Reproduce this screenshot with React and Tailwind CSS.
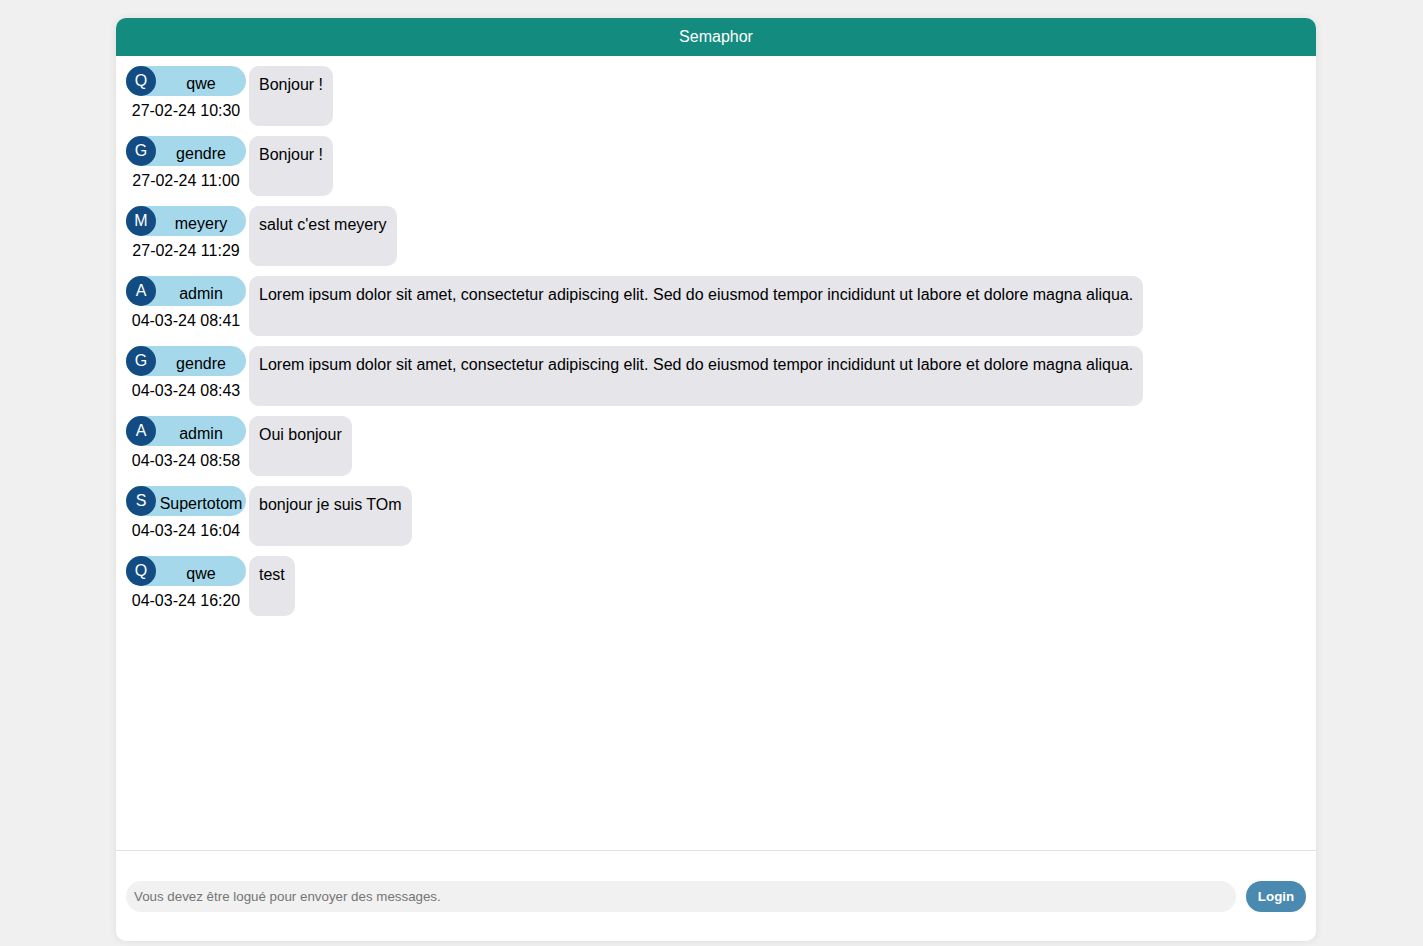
import React from 'react';

const messages = [
  { user: 'qwe', date: '27-02-24 10:30', text: 'Bonjour !' },
  { user: 'gendre', date: '27-02-24 11:00', text: 'Bonjour !' },
  { user: 'meyery', date: '27-02-24 11:29', text: "salut c'est meyery" },
  { user: 'admin', date: '04-03-24 08:41', text: 'Lorem ipsum dolor sit amet, consectetur adipiscing elit. Sed do eiusmod tempor incididunt ut labore et dolore magna aliqua.' },
  { user: 'gendre', date: '04-03-24 08:43', text: 'Lorem ipsum dolor sit amet, consectetur adipiscing elit. Sed do eiusmod tempor incididunt ut labore et dolore magna aliqua.' },
  { user: 'admin', date: '04-03-24 08:58', text: 'Oui bonjour' },
  { user: 'Supertotom', date: '04-03-24 16:04', text: 'bonjour je suis TOm' },
  { user: 'qwe', date: '04-03-24 16:20', text: 'test' },
];

function Message({ msg }) {
  return (
    <div className="flex items-stretch gap-[3px]">
      <div className="w-[120px] shrink-0 flex flex-col">
        <div className="flex items-center h-[30px] rounded-full bg-[#a5d8eb]">
          <div className="w-[30px] h-[30px] rounded-full bg-[#124c82] text-white flex items-center justify-center text-[16px] shrink-0">
            {msg.user[0].toUpperCase()}
          </div>
          <span className="flex-1 text-center text-[16px] text-black leading-none pt-[5px]">{msg.user}</span>
        </div>
        <div className="text-center text-[16px] text-black h-[30px] leading-[30px]">{msg.date}</div>
      </div>
      <div className="bg-[#e5e5ea] rounded-[10px] px-[10px] pt-[10px] pb-[8px] text-[16px] leading-[18px] text-black">
        {msg.text}
      </div>
    </div>
  );
}

export default function App() {
  return (
    <div className="min-h-screen bg-[#f0f0f0] pt-[18px] pb-[5px]" style={{ fontFamily: '"Liberation Sans", Arial, sans-serif' }}>
      <div className="w-[1200px] ml-[116px] bg-white rounded-[10px] shadow-[0_0_8px_rgba(0,0,0,0.08)] flex flex-col h-[923px]">
        <div className="h-[38px] bg-[#138b7e] rounded-t-[10px] flex items-center justify-center text-white text-[16px]">
          Semaphor
        </div>
        <div className="flex-1 flex flex-col gap-[10px] p-[10px] overflow-hidden">
          {messages.map((m, i) => <Message key={i} msg={m} />)}
        </div>
        <div className="border-t border-[#e0e0e0] h-[91px] flex items-center gap-[10px] px-[10px]">
          <div className="flex-1 h-[31px] rounded-full bg-[#f1f1f1] flex items-center px-[8px] pt-[2px] text-[13.33px] text-[#757575]">
            Vous devez être logué pour envoyer des messages.
          </div>
          <button className="w-[60px] h-[31px] rounded-full bg-[#4a89b0] text-white text-[13.33px] font-bold pt-[1px]">Login</button>
        </div>
      </div>
    </div>
  );
}
